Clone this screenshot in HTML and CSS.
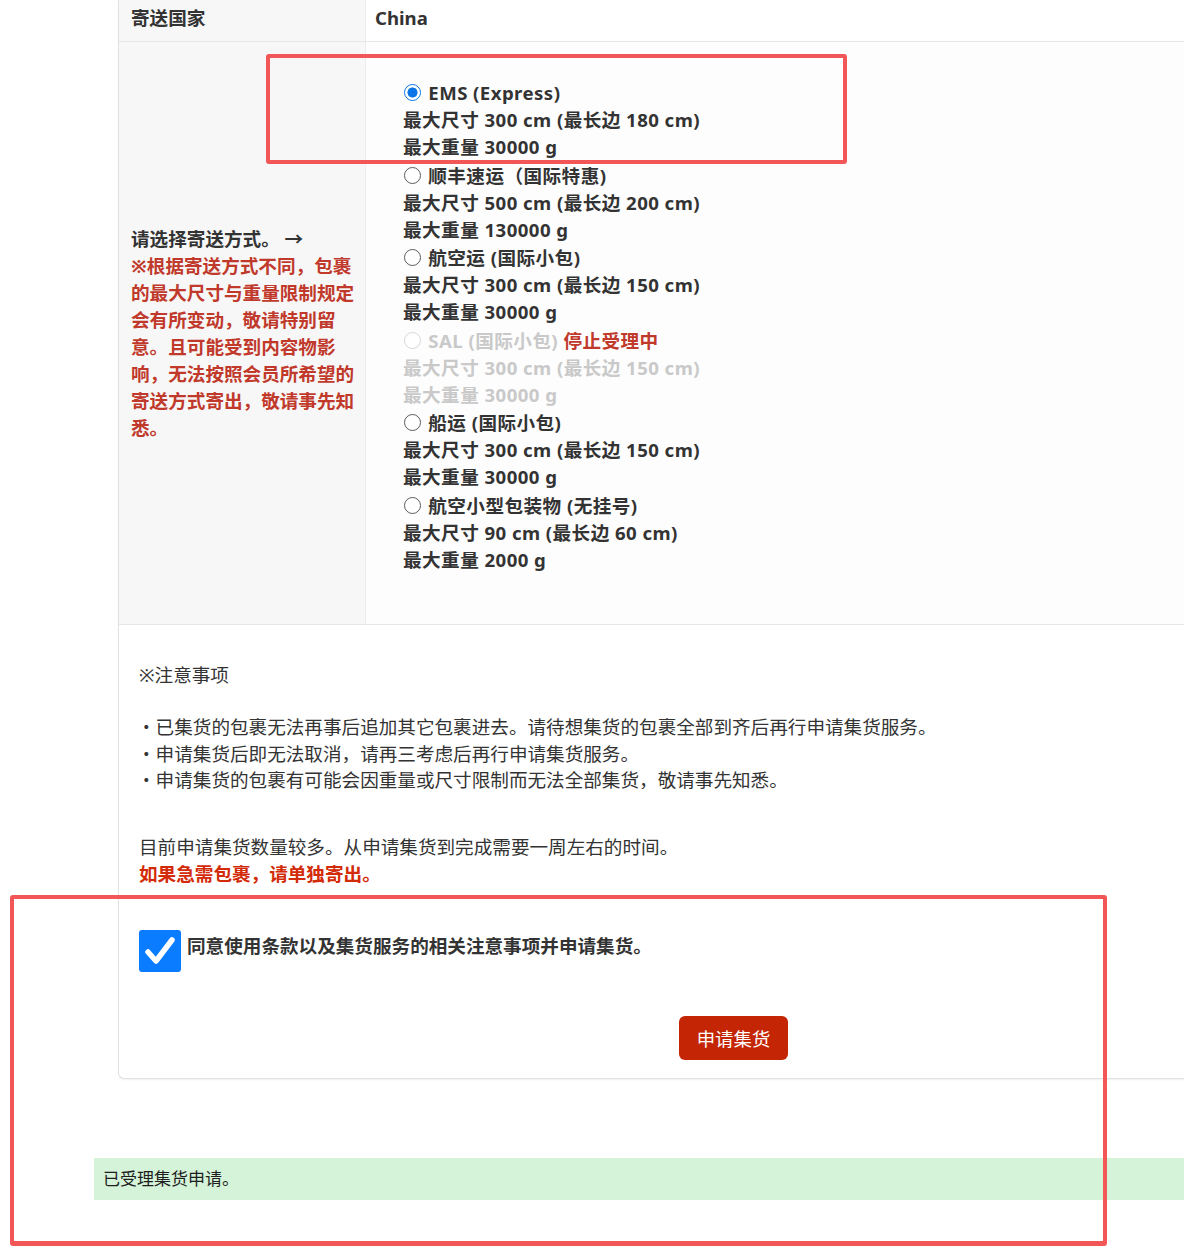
FILE: index.html
```html
<!DOCTYPE html>
<html lang="zh-CN">
<head>
<meta charset="utf-8">
<title>申请集货</title>
<link rel="stylesheet" href="styles.css">
</head>
<body>
<div class="page">
  <div class="card">
    <table class="ship-table">
      <tr class="row-country">
        <th>寄送国家</th>
        <td>China</td>
      </tr>
      <tr class="row-method">
        <th>
          <span class="prompt">请选择寄送方式。 →</span><br>
          <span class="warn">※根据寄送方式不同，包裹的最大尺寸与重量限制规定会有所变动，敬请特别留意。且可能受到内容物影响，无法按照会员所希望的寄送方式寄出，敬请事先知悉。</span>
        </th>
        <td>
          <label class="option">
            <span class="opt-title"><input type="radio" name="method" checked> EMS (Express)</span>
            <span class="opt-line">最大尺寸 300 cm (最长边 180 cm)</span>
            <span class="opt-line">最大重量 30000 g</span>
          </label>
          <label class="option">
            <span class="opt-title"><input type="radio" name="method"> 顺丰速运（国际特惠)</span>
            <span class="opt-line">最大尺寸 500 cm (最长边 200 cm)</span>
            <span class="opt-line">最大重量 130000 g</span>
          </label>
          <label class="option">
            <span class="opt-title"><input type="radio" name="method"> 航空运 (国际小包)</span>
            <span class="opt-line">最大尺寸 300 cm (最长边 150 cm)</span>
            <span class="opt-line">最大重量 30000 g</span>
          </label>
          <label class="option disabled">
            <span class="opt-title"><input type="radio" name="method" disabled> SAL (国际小包) <span class="stopped">停止受理中</span></span>
            <span class="opt-line">最大尺寸 300 cm (最长边 150 cm)</span>
            <span class="opt-line">最大重量 30000 g</span>
          </label>
          <label class="option">
            <span class="opt-title"><input type="radio" name="method"> 船运 (国际小包)</span>
            <span class="opt-line">最大尺寸 300 cm (最长边 150 cm)</span>
            <span class="opt-line">最大重量 30000 g</span>
          </label>
          <label class="option">
            <span class="opt-title"><input type="radio" name="method"> 航空小型包装物 (无挂号)</span>
            <span class="opt-line">最大尺寸 90 cm (最长边 60 cm)</span>
            <span class="opt-line">最大重量 2000 g</span>
          </label>
        </td>
      </tr>
    </table>

    <div class="notes">
      <p class="notes-title">※注意事项</p>
      <ul class="notes-list">
        <li>・已集货的包裹无法再事后追加其它包裹进去。请待想集货的包裹全部到齐后再行申请集货服务。</li>
        <li>・申请集货后即无法取消，请再三考虑后再行申请集货服务。</li>
        <li>・申请集货的包裹有可能会因重量或尺寸限制而无法全部集货，敬请事先知悉。</li>
      </ul>
      <p class="notice">目前申请集货数量较多。从申请集货到完成需要一周左右的时间。</p>
      <p class="urgent">如果急需包裹，请单独寄出。</p>
    </div>

    <label class="agree">
      <span class="check-box">
        <svg viewBox="0 0 42 42" width="42" height="42" aria-hidden="true"><path d="M9 22 L17 31 L33 10" fill="none" stroke="#fff" stroke-width="5.5" stroke-linecap="round" stroke-linejoin="round"/></svg>
      </span>
      <span class="agree-text">同意使用条款以及集货服务的相关注意事项并申请集货。</span>
    </label>

    <div class="actions">
      <button class="submit" type="button">申请集货</button>
    </div>
  </div>

  <div class="alert-success">已受理集货申请。</div>
</div>

<div class="mark mark-ems"></div>
<div class="mark mark-submit"></div>
</body>
</html>
```

FILE: styles.css
```css
html, body {
  margin: 0;
  padding: 0;
  background: #fff;
  overflow: hidden;
}

body {
  font-family: "Noto Sans", "Noto Sans CJK SC", sans-serif;
  color: #333;
  font-size: 18.6px;
  position: relative;
  height: 1257px;
}

.page {
  margin-left: 94px;
  width: 1200px;
}

.card {
  margin-left: 24px;
  border: 1px solid #e2e2e2;
  border-top: none;
  border-right: none;
  border-radius: 0 0 0 6px;
  box-shadow: 0 1px 2px rgba(0, 0, 0, 0.06);
  padding-bottom: 18px;
}

.ship-table {
  width: 100%;
  border-collapse: collapse;
}

.ship-table th,
.ship-table td {
  text-align: left;
  line-height: 27px;
  font-weight: 700;
  border-bottom: 1px solid #e6e6e6;
}

.ship-table th {
  width: 226px;
  background: #f7f7f7;
  border-right: 1px solid #ececec;
  padding-left: 12px;
  padding-right: 8px;
}

.row-country th,
.row-country td {
  padding-top: 4px;
  padding-bottom: 10px;
  vertical-align: top;
}

.row-country td {
  padding-left: 9px;
}

.row-method th {
  vertical-align: middle;
}

.row-method td {
  padding: 37px 0 50px 37px;
  vertical-align: top;
  background: #fdfdfd;
  letter-spacing: 0.45px;
}

.prompt {
  color: #333;
}

.warn {
  color: #c0392b;
}

.option {
  display: block;
  margin-bottom: 1.5px;
}

.opt-title,
.opt-line {
  display: block;
}

.opt-title input {
  appearance: none;
  -webkit-appearance: none;
  width: 17px;
  height: 17px;
  margin: 0 2px 0 1px;
  border: 1.5px solid #5a5a5a;
  border-radius: 50%;
  background: #fff;
  vertical-align: -1px;
  box-sizing: border-box;
}

.opt-title input:checked {
  border: 1.5px solid #0b75e8;
  background: radial-gradient(circle, #0b75e8 0 4.8px, #fff 5.3px);
}

.option.disabled {
  color: #c9c9c9;
}

.option.disabled input {
  border-color: #d6d6d6;
}

.stopped {
  color: #c0392b;
}

.notes {
  padding: 36px 20px 0 20px;
  font-weight: 400;
}

.notes p {
  margin: 0;
  line-height: 27px;
}

.notes-list {
  list-style: none;
  margin: 26px 0 0 0;
  padding: 0;
  line-height: 26.5px;
}

.notes-list li {
  margin-left: -2px;
}

.notes .notice {
  margin-top: 39px;
}

.notes .urgent {
  color: #d32a07;
  font-weight: 700;
}

.agree {
  display: flex;
  align-items: flex-start;
  gap: 6px;
  margin: 43px 0 0 20px;
}

.check-box {
  width: 42px;
  height: 42px;
  border-radius: 3px;
  background: #0a7cff;
  flex: none;
  display: block;
}

.check-box svg {
  display: block;
}

.agree-text {
  font-weight: 700;
  line-height: 27px;
  margin-top: 2px;
}

.actions {
  display: flex;
  padding-left: 560px;
  margin-top: 44px;
}

.submit {
  font-family: inherit;
  font-size: 18.4px;
  color: #fff;
  background: #c42504;
  border: none;
  border-radius: 6px;
  height: 44px;
  width: 109px;
  padding: 0;
}

.alert-success {
  margin-top: 79px;
  background: #d4f3d8;
  height: 42px;
  line-height: 42px;
  padding-left: 9px;
  font-size: 17px;
  color: #1e1e1e;
}

/* highlight frames drawn over the form */
.mark {
  position: absolute;
  border: 4px solid #f25656;
  border-radius: 3px;
  box-sizing: border-box;
  pointer-events: none;
}

.mark-ems {
  left: 266px;
  top: 54px;
  width: 581px;
  height: 110px;
}

.mark-submit {
  left: 10px;
  top: 895px;
  width: 1097px;
  height: 351px;
  border-bottom-width: 5px;
}
```
